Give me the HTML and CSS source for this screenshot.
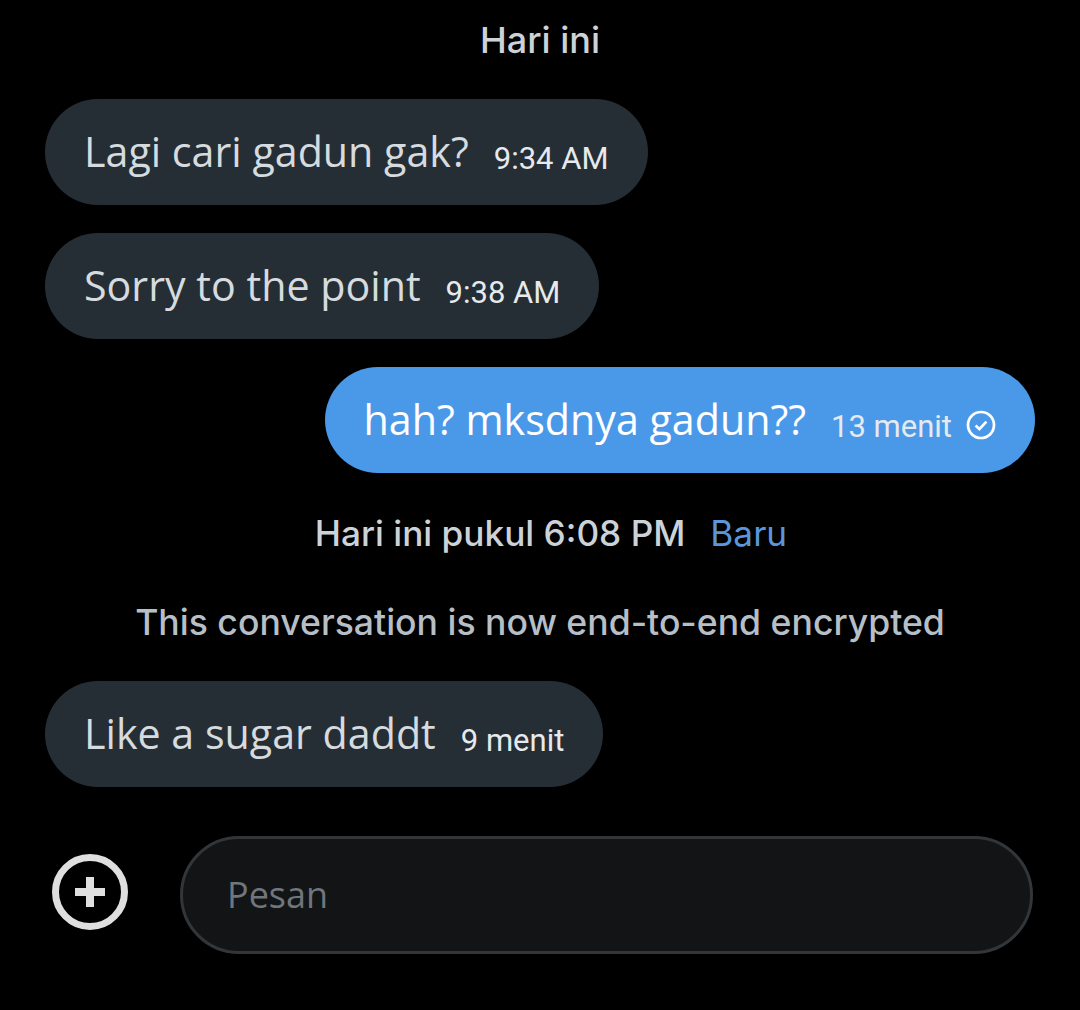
FILE: index.html
```html
<!DOCTYPE html>
<html lang="id">
<head>
<meta charset="utf-8">
<title>Pesan</title>
<meta name="viewport" content="width=device-width,initial-scale=1">
<link rel="stylesheet" href="styles.css">
</head>
<body>
<div class="chat">
  <div class="day">Hari ini</div>

  <!-- pesan masuk -->
  <div class="bubble in first"><span class="txt">Lagi cari gadun gak?</span><span class="time">9:34 AM</span></div>
  <div class="bubble in"><span class="txt">Sorry to the point</span><span class="time">9:38 AM</span></div>

  <div class="bubble out">
    <span class="txt">hah? mksdnya gadun??</span><span class="time">13 menit</span>
    <svg class="seen" width="30" height="30" viewBox="0 0 30 30" fill="none" stroke="#fff" stroke-width="2.7"><circle cx="15" cy="15" r="13"/><path d="M9.6 15.6l3.8 3.6 7-7.6"/></svg>
  </div>

  <div class="new-line"><span>Hari ini pukul 6:08 PM</span><span class="new">Baru</span></div>
  <div class="notice">This conversation is now end-to-end encrypted</div>

  <div class="bubble in last"><span class="txt">Like a sugar daddt</span><span class="time">9 menit</span></div>
</div>

<div class="composer">
  <button class="add">
    <svg width="78" height="78" viewBox="0 0 78 78" fill="none" stroke="#dfdfdf"><circle cx="39" cy="39" r="34.5" stroke-width="7"/><path d="M39 24v30M24 39h30" stroke-width="8"/></svg>
  </button>
  <div class="input">Pesan</div>
</div>
</body>
</html>
```

FILE: styles.css
```css
html,body { background:#000 }
body   { margin:0; height:1010px; overflow:hidden; font-family:"Inter","Noto Sans",sans-serif; color:#e7e9ea }
.chat  { display:flex; flex-direction:column; padding:0 45px }
.day   { height:80px; line-height:80px; text-align:center; font-size:36px; font-weight:500; color:#ccd3d8 }
.bubble { display:flex; align-items:center; height:106px; border-radius:53px; padding:0 39px; margin-top:28px; align-self:flex-start; box-sizing:border-box }
.bubble.first { margin-top:19px }
.bubble.last { margin-top:34px }
.in    { background:#262e35; color:#d5dbdf }
.out   { background:#4a99e9; color:#fff; align-self:flex-end }
.txt   { font-family:"Open Sans",sans-serif; font-size:41.2px; margin-top:-3px }
.time  { font-family:"Roboto",sans-serif; font-size:31px; margin-left:25px; margin-top:13px; color:#e6eaed }
.seen  { margin-left:14px; margin-top:9px }
.new-line { display:flex; justify-content:center; gap:25px; padding-left:22px; margin-top:36px; font-size:35.2px; font-weight:500; color:#ccd3d8; line-height:48px }
.new   { color:#5b96dc; font-weight:400 }
.notice { text-align:center; font-size:35.6px; font-weight:500; color:#b6bfc6; margin-top:42px; line-height:48px }
.composer { display:flex; align-items:center; padding:0 47px 0 51px; margin-top:49px }
.add   { background:none; border:0; padding:0; width:78px; height:78px; display:block; margin-top:-6px }
.input { flex:1; height:118px; margin-left:51px; box-sizing:border-box; background:#121416; border:3px solid #333639; border-radius:59px; padding:0 44px; line-height:112px; font-family:"Open Sans",sans-serif; font-size:36px; color:#6f767c }
```
